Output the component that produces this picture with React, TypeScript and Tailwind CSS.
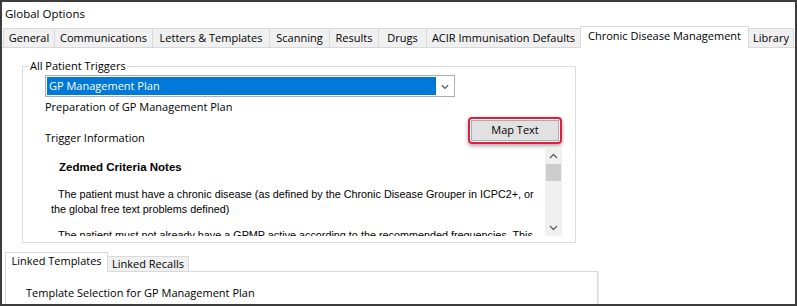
import React from 'react';

const ui = "font-['Open_Sans','Noto_Sans',sans-serif] text-[11px]";

const topTabs = [
  { label: 'General', cls: 'w-[52px] border-l' },
  { label: 'Communications', cls: 'w-[98px]' },
  { label: 'Letters & Templates', cls: 'w-[117px]' },
  { label: 'Scanning', cls: 'w-[60px]' },
  { label: 'Results', cls: 'w-[49px]' },
  { label: 'Drugs', cls: 'w-[48px]' },
  { label: 'ACIR Immunisation Defaults', cls: 'w-[154px]' },
  { label: 'Chronic Disease Management', cls: 'w-[169px]', active: true },
  { label: 'Library', cls: 'w-[45px]' },
];

function Chevron({ up = false, className = '' }: { up?: boolean; className?: string }) {
  return (
    <svg width="9" height="6" viewBox="0 0 9 6" className={className}>
      <polyline
        points={up ? '1,5 4.5,1.5 8,5' : '1,1 4.5,4.5 8,1'}
        fill="none"
        stroke="currentColor"
        strokeWidth="1.3"
      />
    </svg>
  );
}

function TabStrip() {
  return (
    <div className="flex items-end h-[22px] pl-px border-b border-[#d9d9d9]">
      {topTabs.map((t) =>
        t.active ? (
          <div
            key={t.label}
            className={`${t.cls} -ml-px -mb-px h-[22px] relative z-10 bg-white border-l border-t border-r border-[#d9d9d9] flex items-center justify-center pb-[2px] text-black`}
          >
            {t.label}
          </div>
        ) : (
          <div
            key={t.label}
            className={`${t.cls} h-[19px] bg-[#f0f0f0] border-t border-r border-[#d9d9d9] flex items-center justify-center text-black`}
          >
            {t.label}
          </div>
        )
      )}
    </div>
  );
}

function NotesBox() {
  return (
    <div className="flex mt-px ml-[22px] mr-[13px] h-[89px]">
      <div className="flex-1 overflow-hidden pl-[6px] pt-[13px] font-['Liberation_Sans',Arial,sans-serif] text-[10.8px] leading-[15px] text-black">
        <div className="pl-[8px] font-bold text-[11.5px]">Zedmed Criteria Notes</div>
        <div className="mt-[12px] whitespace-nowrap">
          <div className="pl-[7px]">
            The patient must have a chronic disease (as defined by the Chronic Disease Grouper in ICPC2+, or
          </div>
          <div>the global free text problems defined)</div>
        </div>
        <div className="mt-[11px] whitespace-nowrap">
          <div className="pl-[7px]">
            The patient must not already have a GPMP active according to the recommended frequencies. This
          </div>
        </div>
      </div>
      <div className="w-[17px] bg-[#f0f0f0] flex flex-col text-[#606060]">
        <div className="h-[17px] flex items-center justify-center">
          <Chevron up />
        </div>
        <div className="h-[17px] mx-px bg-[#cdcdcd]" />
        <div className="flex-1" />
        <div className="h-[17px] flex items-center justify-center">
          <Chevron />
        </div>
      </div>
    </div>
  );
}

function TriggersGroup() {
  return (
    <div className="relative ml-[20px] mt-[18px] w-[554px] h-[177px] border border-[#dcdcdc]">
      <div className="absolute left-[6px] -top-[9px] px-px bg-white leading-[16px] text-black">
        All Patient Triggers
      </div>

      <div className="mt-[8px] ml-[22px] w-[410px] h-[22px] border border-[#adadad] bg-white p-px flex">
        <div className="flex-1 bg-[#0078d7] text-white pl-[2px] flex items-center">GP Management Plan</div>
        <div className="w-[17px] flex items-center justify-center text-[#555]">
          <Chevron className="mt-px w-[8px]" />
        </div>
      </div>

      <div className="mt-[2px] ml-[22px] leading-[16px] text-black">Preparation of GP Management Plan</div>

      <div className="flex mt-[2px] pl-[22px] pr-[13px]">
        <div className="mt-[13px] leading-[16px] text-black">Trigger Information</div>
        <div className="ml-auto w-[94px] h-[27px] border-2 border-[#e31c3d] rounded-[4px] shadow-[0_2px_4px_rgba(0,0,0,0.35)] p-px">
          <div className="h-full border border-[#adadad] bg-[#e1e1e1] flex items-center justify-center text-black">
            Map Text
          </div>
        </div>
      </div>

      <NotesBox />
    </div>
  );
}

function LinkedPanel() {
  return (
    <div className="mt-[9px] ml-[3px] flex flex-col">
      <div className="flex items-end">
        <div className="relative z-10 -mb-px w-[103px] h-[20px] bg-white border-l border-t border-r border-[#d9d9d9] flex items-center justify-center pb-[2px] text-black">
          Linked Templates
        </div>
        <div className="w-[81px] h-[15px] bg-[#f0f0f0] border-t border-r border-[#d9d9d9] flex items-center justify-center text-black">
          Linked Recalls
        </div>
      </div>
      <div className="w-[593px] h-[60px] border border-[#d9d9d9] shadow-[1px_0_0_#ececec] pl-[20px] pt-[13px]">
        <div className="leading-[16px] text-black">Template Selection for GP Management Plan</div>
      </div>
    </div>
  );
}

export default function App() {
  return (
    <div className={`w-[797px] h-[306px] bg-white border-2 border-[#3c3c3c] overflow-hidden flex flex-col ${ui}`}>
      <div className="h-[24px] shrink-0 pl-[3px] flex items-center text-[11.5px] text-black">Global Options</div>
      <TabStrip />
      <div className="flex-1 flex flex-col">
        <TriggersGroup />
        <LinkedPanel />
      </div>
    </div>
  );
}
